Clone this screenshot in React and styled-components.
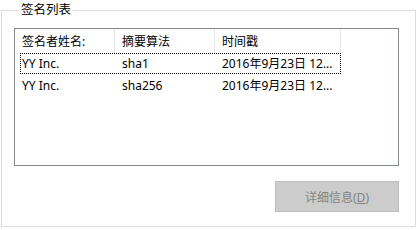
import React from "react";
import styled, { createGlobalStyle } from "styled-components";

const Global = createGlobalStyle`
  html, body { margin: 0; padding: 0; background: #ffffff; }
  body { font-family: "Noto Sans", "Noto Sans CJK SC", sans-serif; font-size: 12px; color: #000; }
`;

const Page = styled.div`
  width: 417px;
  height: 230px;
  padding: 0 1px 0 1px;
  box-sizing: border-box;
`;

const Group = styled.fieldset`
  margin: 0;
  padding: 0 16px 0 12px;
  width: 415px;
  height: 227px;
  box-sizing: border-box;
  border: 1px solid #dcdcdc;
  display: flex;
  flex-direction: column;
  align-items: stretch;
`;

const Legend = styled.legend`
  margin-left: 5px;
  padding: 0 2px;
  font-size: 12.5px;
  line-height: 20px;
  height: 20px;
  color: #000;
`;

const List = styled.div`
  margin-top: 8px;
  height: 138px;
  border: 1px solid #828790;
  box-sizing: border-box;
  display: flex;
  flex-direction: column;
`;

const Row = styled.div`
  display: grid;
  grid-template-columns: 100px 100px 121px;
  height: ${(p) => p.$h}px;
  align-items: center;
  margin-left: 5px;
  width: 321px;
  ${(p) => (p.$focus ? `outline: 1px dotted #000; outline-offset: -1px;` : "")}
`;

const HeaderRow = styled.div`
  display: grid;
  grid-template-columns: 100px 100px 126px;
  height: 24px;
  width: 326px;
`;

const HeaderCell = styled.div`
  display: flex;
  align-items: center;
  padding-left: 7px;
  padding-top: 2px;
  border-right: 1px solid #e5e5e5;
  line-height: 1;
`;

const Cell = styled.div`
  padding-left: 2px;
  padding-top: 1px;
  white-space: nowrap;
  line-height: 1;
`;

const Footer = styled.div`
  display: flex;
  justify-content: flex-end;
  margin-top: 15px;
`;

const Button = styled.button`
  width: 124px;
  height: 31px;
  background: #cccccc;
  border: 1px solid #bfbfbf;
  color: #838383;
  font-family: "Noto Sans", "Noto Sans CJK SC", sans-serif;
  font-size: 12px;
  padding: 0;
  & u { text-decoration: underline; }
`;

const rows = [
  ["YY Inc.", "sha1", "2016年9月23日 12..."],
  ["YY Inc.", "sha256", "2016年9月23日 12..."],
];

export default function App() {
  return (
    <Page>
      <Global />
      <Group>
        <Legend>签名列表</Legend>
        <List>
          <HeaderRow>
            <HeaderCell>签名者姓名:</HeaderCell>
            <HeaderCell>摘要算法</HeaderCell>
            <HeaderCell>时间戳</HeaderCell>
          </HeaderRow>
          {rows.map((r, i) => (
            <Row key={i} $h={i === 0 ? 21 : 22} $focus={i === 0}>
              <Cell>{r[0]}</Cell>
              <Cell>{r[1]}</Cell>
              <Cell>{r[2]}</Cell>
            </Row>
          ))}
        </List>
        <Footer>
          <Button disabled>
            详细信息(<u>D</u>)
          </Button>
        </Footer>
      </Group>
    </Page>
  );
}
